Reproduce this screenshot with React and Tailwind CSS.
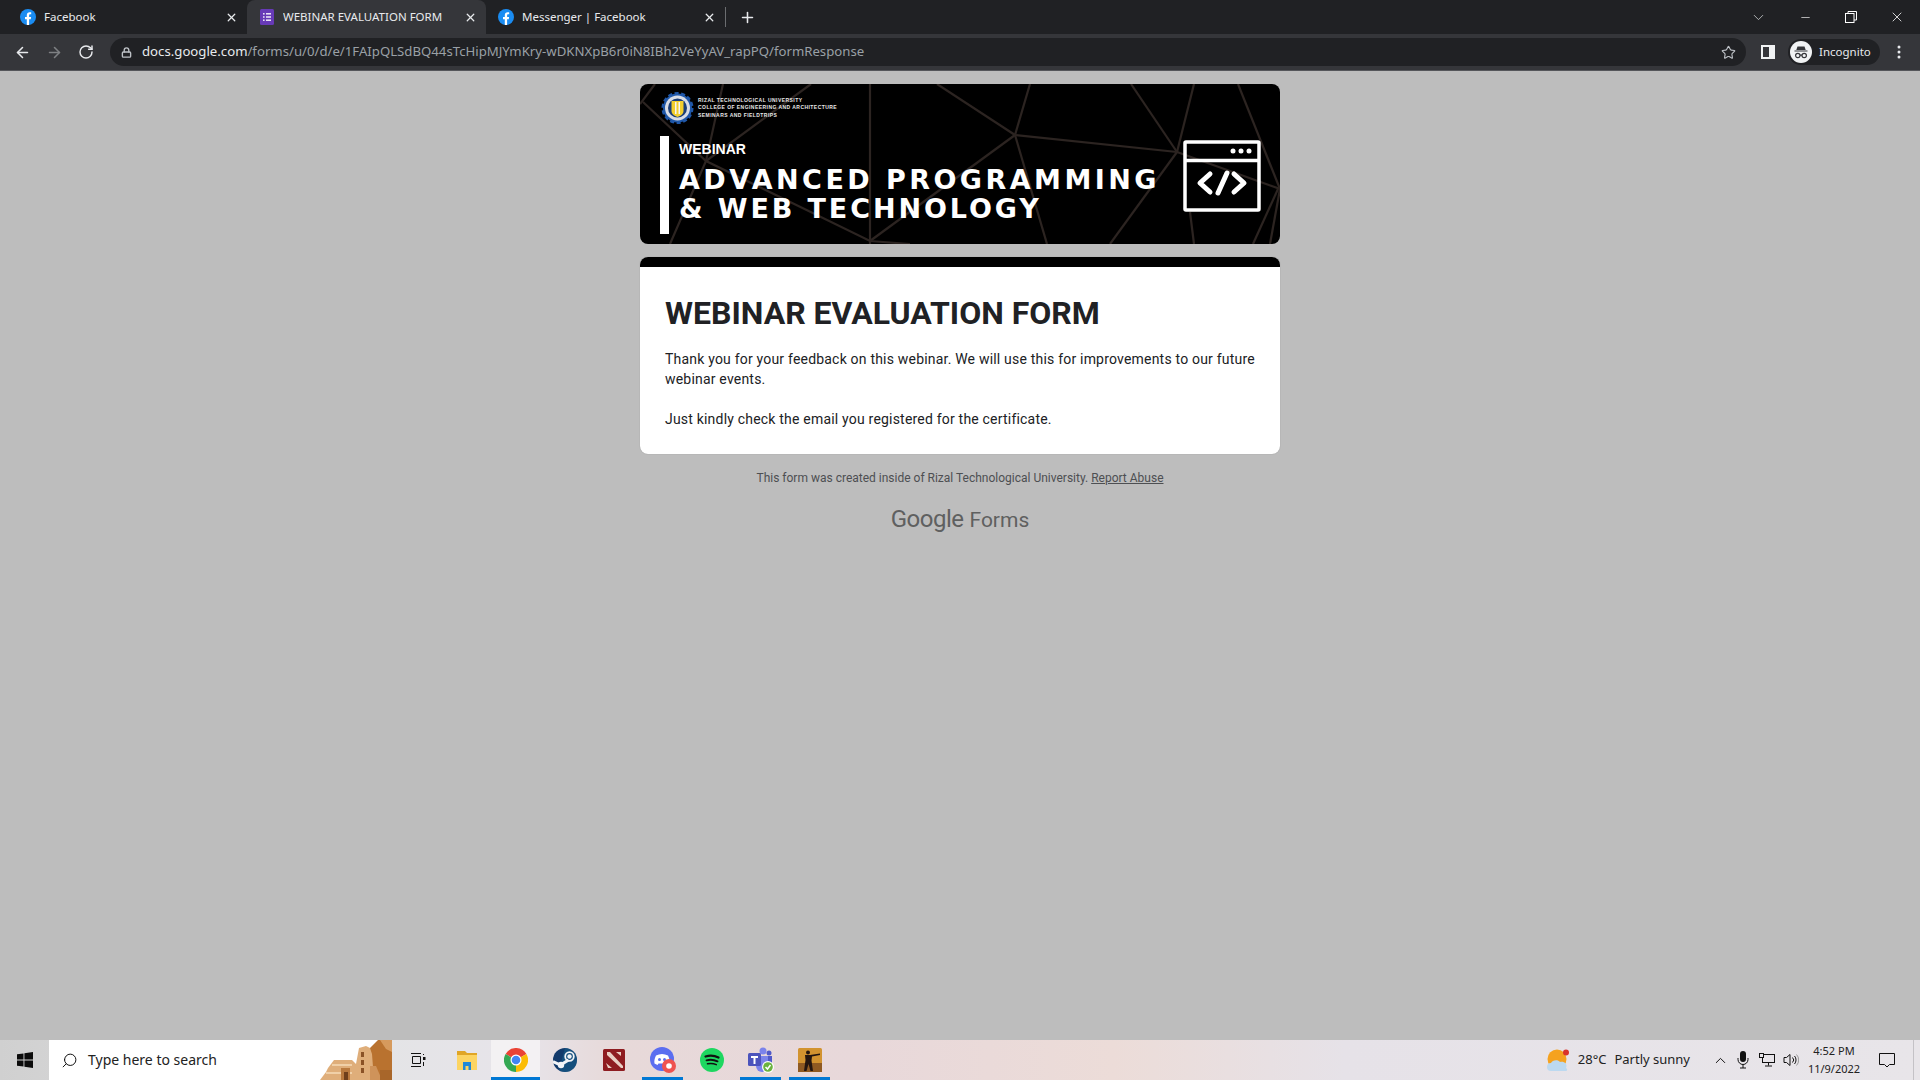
import React from "react";
import {
  ArrowLeft,
  ArrowRight,
  ChevronDown,
  ChevronUp,
  Lock,
  Minus,
  Plus,
  RotateCw,
  Search,
  Star,
  X,
} from "lucide-react";

const FbIcon = () => (
  <svg width="16" height="16" viewBox="0 0 16 16" className="shrink-0">
    <circle cx="8" cy="8" r="8" fill="#1a8cf2" />
    <path d="M6.800 16V10.300H5V8h1.800V6.300C6.800 4.400 7.900 3.300 9.600 3.300c.8 0 1.600.1 1.600.1v1.900h-.9c-.9 0-1.200.6-1.200 1.100V8h2l-.3 2.300H9.100V16z" fill="#fff" />
  </svg>
);

const FormsIcon = () => (
  <svg width="16" height="16" viewBox="0 0 16 16" className="shrink-0">
    <rect x="1" width="14" height="16" rx="1.500" fill="#673ab7" />
    <g fill="#e8e0f5">
      <rect x="4" y="4" width="1.600" height="1.600" />
      <rect x="7" y="4" width="5" height="1.600" />
      <rect x="4" y="7.200" width="1.600" height="1.600" />
      <rect x="7" y="7.200" width="5" height="1.600" />
      <rect x="4" y="10.400" width="1.600" height="1.600" />
      <rect x="7" y="10.400" width="5" height="1.600" />
    </g>
  </svg>
);

const Tab = ({ icon, title, active }) => (
  <div className={`flex h-[34px] w-[239px] items-center pl-3 pr-2 ${active ? "rounded-t-lg bg-[#35363a]" : ""}`}>
    {icon}
    <span className="ml-2 flex-1 truncate text-[11.5px] text-[#e8eaed]">{title}</span>
    <X size={13} strokeWidth={2.4} className="mr-[1px] text-[#e8eaed]" />
  </div>
);

const TabStrip = () => (
  <div className="flex h-[34px] items-center bg-[#202124] pl-2 font-['Noto_Sans',sans-serif]">
    <Tab icon={<FbIcon />} title="Facebook" />
    <Tab icon={<FormsIcon />} title="WEBINAR EVALUATION FORM" active />
    <Tab icon={<FbIcon />} title="Messenger | Facebook" />
    <div className="h-5 w-px bg-[#6b6d70]" />
    <Plus size={17} strokeWidth={2.2} className="ml-[13px] text-[#e8eaed]" />
    <div className="flex-1" />
    <ChevronDown size={17} strokeWidth={1.2} className="mr-[32px] text-[#c4c7c9]" />
    <Minus size={13} strokeWidth={1.2} className="mr-[33px] text-white" />
    <svg width="12" height="12" viewBox="0 0 12 12" fill="none" stroke="#fff" className="mr-[32px]">
      <rect x="0.500" y="2.500" width="8.500" height="9" />
      <path d="M3 2.500V.5h8.500v8.500H9" />
    </svg>
    <X size={16} strokeWidth={1.2} className="mr-[15px] text-white" />
  </div>
);

const IncognitoIcon = () => (
  <svg width="22" height="22" viewBox="0 0 22 22">
    <circle cx="11" cy="11" r="11" fill="#f1f3f4" />
    <path d="M7.500 5.500h7l1.200 3.500H6.300zM4.500 9.500h13v1h-13z" fill="#35363a" />
    <circle cx="7.800" cy="14.500" r="2.200" fill="none" stroke="#35363a" strokeWidth="1.200" />
    <circle cx="14.200" cy="14.500" r="2.200" fill="none" stroke="#35363a" strokeWidth="1.200" />
    <path d="M10 14.200h2" stroke="#35363a" strokeWidth="1.200" />
  </svg>
);

const Toolbar = () => (
  <div className="flex h-[37px] items-center border-b border-[#55565a] bg-[#35363a] pl-[14px] font-['Noto_Sans',sans-serif]">
    <ArrowLeft size={17} strokeWidth={2.2} className="text-[#e8eaed]" />
    <ArrowRight size={17} strokeWidth={2.2} className="ml-[15px] text-[#7e8083]" />
    <RotateCw size={16} strokeWidth={2.2} className="ml-[15px] text-[#e8eaed]" />
    <div className="ml-[16px] flex h-[28px] w-[1636px] items-center rounded-full bg-[#202124] pl-[11px] pr-[10px]">
      <Lock size={11} strokeWidth={3} className="text-[#bdc1c6]" />
      <div className="ml-[10px] flex-1 whitespace-nowrap text-[13.2px] text-[#9aa0a6]">
        <span className="text-[#e8eaed]">docs.google.com</span>
        /forms/u/0/d/e/1FAIpQLSdBQ44sTcHipMJYmKry-wDKNXpB6r0iN8IBh2VeYyAV_rapPQ/formResponse
      </div>
      <Star size={15} strokeWidth={1.8} className="text-[#bdc1c6]" />
    </div>
    <div className="ml-[15px] h-[14px] w-[14px] border-2 border-r-[6px] border-[#f1f3f4]" />
    <div className="ml-[13px] flex h-[26px] w-[92px] items-center rounded-full bg-[#202124] pl-[2px]">
      <IncognitoIcon />
      <span className="ml-[7px] text-[11.5px] text-[#e8eaed]">Incognito</span>
    </div>
    <svg width="4" height="14" viewBox="0 0 4 14" fill="#e8eaed" className="ml-[17px]">
      <circle cx="2" cy="2" r="1.500" />
      <circle cx="2" cy="7" r="1.500" />
      <circle cx="2" cy="12" r="1.500" />
    </svg>
  </div>
);

const BANNER_LINES = [
  "M375 51 390 0", "M375 51 297 0", "M375 51 537 68", "M375 51 230 157", "M375 51 407 160",
  "M537 68 491 0", "M537 68 554 0", "M537 68 470 160", "M537 68 640 105", "M598 0 640 105",
  "M550 128 554 160", "M638 105 613 160", "M230 0V160", "M83 0 66 77 30 160", "M3 18 66 77 230 157 270 160",
  "M171 0 66 77", "M15 0 0 20", "M640 105 630 160",
];

const Banner = () => (
  <div className="relative h-[160px] w-[640px] overflow-hidden rounded-lg bg-black text-white font-['Liberation_Sans',sans-serif]">
    <svg width="640" height="160" viewBox="0 0 640 160" fill="none" stroke="#2c2421" strokeWidth="2.200" className="absolute inset-0">
      {BANNER_LINES.map((d) => (
        <path key={d} d={d} />
      ))}
    </svg>
    <div className="relative flex h-full flex-col pl-5 pt-[7px]">
      <div className="flex items-center">
        <svg width="33" height="34" viewBox="0 0 33 34" className="ml-[1px]">
          <circle cx="16.500" cy="17" r="14.500" fill="#1f57a8" stroke="#1f57a8" strokeWidth="3" strokeDasharray="4 2.500" />
          <circle cx="16.500" cy="17" r="12.500" fill="#d8dde6" />
          <circle cx="16.500" cy="17" r="9.500" fill="#1b3f7a" />
          <path d="M10.500 10h12v10c0 3-3 5-6 6-3-1-6-3-6-6z" fill="#f2cf2e" />
          <path d="M14 11h1.500v12H14zM17.500 11H19v12h-1.500z" fill="#f5f5f5" />
        </svg>
        <div className="ml-[4px] flex flex-col gap-[2px] text-[5px] font-bold leading-[5.5px] tracking-[0.45px] text-[#e8e8e8]">
          <span>RIZAL TECHNOLOGICAL UNIVERSITY</span>
          <span>COLLEGE OF ENGINEERING AND ARCHITECTURE</span>
          <span>SEMINARS AND FIELDTRIPS</span>
        </div>
      </div>
      <div className="mt-[11px] flex items-start">
        <div className="h-[98px] w-[9px] bg-white" />
        <div className="ml-[10px] flex flex-col pt-[5px]">
          <span className="text-[14px] font-bold leading-4">WEBINAR</span>
          <span className="mt-[8px] whitespace-nowrap font-['DejaVu_Sans',sans-serif] text-[27px] font-bold leading-[29px] tracking-[3.450px]">ADVANCED PROGRAMMING</span>
          <span className="whitespace-nowrap font-['DejaVu_Sans',sans-serif] text-[27px] font-bold leading-[29px] tracking-[2.900px]">&amp; WEB TECHNOLOGY</span>
        </div>
      </div>
    </div>
    <svg width="78" height="72" viewBox="0 0 78 72" fill="none" stroke="#fff" strokeWidth="3.500" className="absolute left-[543px] top-[56px]">
      <rect x="2" y="2" width="74" height="68" rx="1" />
      <path d="M2 20.500h74" />
      <circle cx="50" cy="11" r="2.500" fill="#fff" stroke="none" />
      <circle cx="58" cy="11" r="2.500" fill="#fff" stroke="none" />
      <circle cx="66" cy="11" r="2.500" fill="#fff" stroke="none" />
      <path d="M27 34 17 43l10 9M51 34l10 9-10 9M44 33 35 53" strokeWidth="5" strokeLinecap="round" strokeLinejoin="round" />
    </svg>
  </div>
);

const FormCard = () => (
  <div className="mt-[13px] w-[640px] overflow-hidden rounded-lg bg-white shadow-[0_0_1px_rgba(0,0,0,0.3)] font-['Roboto',sans-serif]">
    <div className="h-[10px] bg-black" />
    <div className="px-[25px] pb-[25px] pt-[26px]">
      <h1 className="text-[32px] font-bold leading-10 text-[#202124]">WEBINAR EVALUATION FORM</h1>
      <div className="mt-[16px] text-sm leading-5 tracking-[0.2px] text-[#202124]">
        <p>Thank you for your feedback on this webinar. We will use this for improvements to our future webinar events.</p>
        <p className="mt-5">Just kindly check the email you registered for the certificate.</p>
      </div>
    </div>
  </div>
);

const PageBody = () => (
  <div className="flex flex-1 flex-col items-center overflow-hidden bg-[#bdbdbd] pt-[13px]">
    <Banner />
    <FormCard />
    <p className="mt-[16px] text-xs leading-4 text-[#4d4f52] font-['Roboto',sans-serif]">
      This form was created inside of Rizal Technological University. <span className="underline">Report Abuse</span>
    </p>
    <div className="mt-[19px] text-[24px] leading-7 text-[#5f6060] font-['Roboto',sans-serif]">
      <span className="tracking-[-0.5px]">Google</span> <span className="text-[21px]">Forms</span>
    </div>
  </div>
);

const Pueblo = () => (
  <svg width="72" height="40" viewBox="0 0 72 40" className="shrink-0">
    <path d="M46 40 50 8 58 0h14v40z" fill="#b9722f" />
    <path d="M60 0h12v12l-6-3z" fill="#d69a5d" />
    <path d="M0 40 6 32 8 28 14 20H32L36 24 39 8 46 6 50 8 52 14 54 40z" fill="#dfae7a" />
    <path d="M41 12h3v5h-3zM41 20h3v5h-3zM41 28h3v5h-3z" fill="#8a5226" />
    <path d="M6 32h26v2H6zM12 24h20v2H12z" fill="#f0d0a8" />
    <path d="M21 28h9v12h-9z" fill="#b9793e" />
    <path d="M24 32h4v8h-4z" fill="#6f3f1c" />
    <path d="M50 26h6l6 14H50z" fill="#cf935a" />
    <path d="M60 30h12v10H60z" fill="#a8662a" />
  </svg>
);

const ChromeIcon = () => (
  <svg width="24" height="24" viewBox="0 0 24 24">
    <path d="M12 12 1.600 6A12 12 0 0 1 22.400 6z" fill="#ea4335" />
    <path d="M12 12 22.400 6A12 12 0 0 1 12 24z" fill="#fbbc04" />
    <path d="M12 12 12 24A12 12 0 0 1 1.600 6z" fill="#34a853" />
    <circle cx="12" cy="12" r="5.500" fill="#fff" />
    <circle cx="12" cy="12" r="4.300" fill="#4285f4" />
  </svg>
);

const TaskView = () => (
  <svg width="16" height="16" viewBox="0 0 16 16" fill="none" stroke="#111">
    <path d="M1 1.500h10M1 14.500h10M2.500 4.500h8v7h-8z" />
    <rect x="13" y="5" width="2.500" height="3" fill="#111" stroke="none" />
    <path d="M13.500 2v1M13.500 10v4" />
  </svg>
);

const Explorer = () => (
  <svg width="22" height="20" viewBox="0 0 22 20">
    <path d="M1 1h8l2 2h10v4H1z" fill="#e0a526" />
    <path d="M1 5h20v15H1z" fill="#fcd462" />
    <path d="M7 12h8v8h-2.500v-4h-3v4H7z" fill="#1e88d9" />
  </svg>
);

const Steam = () => (
  <svg width="24" height="24" viewBox="0 0 24 24" fill="none">
    <circle cx="12" cy="12" r="12" fill="#123a6b" />
    <path d="M12 0A12 12 0 0 1 24 12 12 12 0 0 1 12 24 12 12 0 0 1 6 22z" fill="#17638f" opacity="0.5" />
    <path d="M0 13.500 7.500 17l8-5" stroke="#f2f4f7" strokeWidth="3" />
    <circle cx="8" cy="17" r="3.200" fill="#f2f4f7" />
    <circle cx="16.500" cy="8.500" r="4.300" stroke="#f2f4f7" strokeWidth="1.800" />
    <circle cx="16.500" cy="8.500" r="2.200" fill="#f2f4f7" />
  </svg>
);

const Dota = () => (
  <svg width="22" height="22" viewBox="0 0 22 22">
    <rect width="22" height="22" rx="1.500" fill="#8e1c20" />
    <path d="M4 3h3l13 14v2h-2L4 6z" fill="#e9cfc4" />
    <path d="M3 14l2 5h4zM13 3h5v4z" fill="#e9cfc4" />
  </svg>
);

const Discord = () => (
  <svg width="26" height="26" viewBox="0 0 26 26">
    <circle cx="12" cy="12" r="12" fill="#5b6ef0" />
    <path d="M6 8.500c4-2 8-2 12 0 1.500 3 2 5.500 1.500 8l-3 1.500-1-1.500h-7l-1 1.500-3-1.500C4 14 4.500 11.500 6 8.500z" fill="#fff" />
    <circle cx="9.500" cy="12.500" r="1.500" fill="#5b6ef0" />
    <circle cx="14.500" cy="12.500" r="1.500" fill="#5b6ef0" />
    <circle cx="19" cy="19" r="7" fill="#ef5350" />
    <circle cx="19" cy="19" r="2.800" fill="#fff" />
  </svg>
);

const Spotify = () => (
  <svg width="24" height="24" viewBox="0 0 24 24" fill="none" stroke="#111" strokeLinecap="round">
    <circle cx="12" cy="12" r="12" fill="#1ed760" stroke="none" />
    <path d="M5.500 8.500c4-1.200 9-1 13 1" strokeWidth="2.200" />
    <path d="M6.500 12.300c3.500-1 7.500-.7 11 1" strokeWidth="1.900" />
    <path d="M7.500 15.800c3-.7 6-.5 8.800.8" strokeWidth="1.500" />
  </svg>
);

const Teams = () => (
  <svg width="26" height="26" viewBox="0 0 26 26">
    <circle cx="15" cy="4" r="3.500" fill="#7b83eb" />
    <circle cx="21" cy="6" r="2.500" fill="#5059c9" />
    <path d="M17 9h7v8a3.500 3.500 0 0 1-7 0z" fill="#5059c9" />
    <path d="M8 9h12v10a6 6 0 0 1-12 0z" fill="#7b83eb" />
    <rect y="6" width="13" height="13" rx="1.500" fill="#4b53bc" />
    <path d="M3 9h7v2H7.500v6h-2v-6H3z" fill="#fff" />
    <circle cx="20" cy="20" r="6" fill="#fff" />
    <circle cx="20" cy="20" r="4.800" fill="#6bb33f" />
    <path d="M17.500 20l2 2 3-4" fill="none" stroke="#fff" strokeWidth="1.500" />
  </svg>
);

const CsIcon = () => (
  <svg width="24" height="24" viewBox="0 0 24 24">
    <rect width="24" height="24" rx="1.500" fill="#d2932f" />
    <path d="M0 15h24v9H0z" fill="#8f5a22" />
    <circle cx="10" cy="4.500" r="2" fill="#241610" />
    <path d="M7 7h5l10-1.500v1.500l-8 1.500 -.5 4 1.500 10.500h-2.500l-2-7-2 7H6l1.500-11z" fill="#241610" />
  </svg>
);

const TaskCell = ({ children, bar, active }) => (
  <div className={`relative flex h-10 w-[49px] items-center justify-center ${active ? "bg-[#f3f1f3]" : ""}`}>
    {children}
    {bar && <div className={`absolute bottom-0 h-[3px] bg-[#0078d4] ${active ? "inset-x-0" : "inset-x-[4px]"}`} />}
  </div>
);

const Taskbar = () => (
  <div className="flex h-10 items-center bg-[linear-gradient(90deg,#d0d0d0_0%,#e4e4e6_20%,#e7e4ea_27%,#e7d9d9_32%,#e8d8da_45%,#ecdcd8_58%,#e6e2e8_70%,#e8e5e9_100%)] font-['Noto_Sans',sans-serif]">
    <div className="flex w-[49px] justify-center">
      <svg width="16" height="16" viewBox="0 0 16 16" fill="#0b0b0b">
        <path d="M0 2.300 6.500 1.400v6.100H0zM7.400 1.300 16 0v7.500H7.400zM0 8.500h6.500v6.100L0 13.700zM7.400 8.500H16V16l-8.600-1.300z" />
      </svg>
    </div>
    <div className="flex h-10 w-[343px] items-center bg-white pl-[12px]">
      <Search size={17} strokeWidth={1.4} className="-scale-x-100 text-[#111]" />
      <span className="ml-[10px] flex-1 text-sm text-[#222]">Type here to search</span>
      <Pueblo />
    </div>
    <div className="ml-[1px] flex">
      <TaskCell><TaskView /></TaskCell>
      <TaskCell><Explorer /></TaskCell>
      <TaskCell bar active><ChromeIcon /></TaskCell>
      <TaskCell><Steam /></TaskCell>
      <TaskCell><Dota /></TaskCell>
      <TaskCell bar><Discord /></TaskCell>
      <TaskCell><Spotify /></TaskCell>
      <TaskCell bar><Teams /></TaskCell>
      <TaskCell bar><CsIcon /></TaskCell>
    </div>
    <div className="flex-1" />
    <svg width="23" height="23" viewBox="0 0 23 23">
      <circle cx="10" cy="10" r="9.500" fill="#f5a21f" />
      <circle cx="19" cy="3.500" r="3" fill="#d9342b" />
      <path d="M4 22a4 4 0 0 1 0-8c1-3 7-4 9-1 4-1 8 2 6 6 2 1 1 3 0 3z" fill="#bcd9f0" />
    </svg>
    <span className="ml-[8px] text-[13px] text-[#222]">28°C</span>
    <span className="ml-[8px] text-[13px] text-[#222]">Partly sunny</span>
    <ChevronUp size={17} strokeWidth={1.4} className="ml-[22px] text-[#111]" />
    <svg width="12" height="18" viewBox="0 0 12 18" fill="#111" className="ml-[8px]">
      <rect x="3" width="6" height="11" rx="3" />
      <path d="M1 7v1.500a5 5 0 0 0 10 0V7M6 13.500V17M3 17h6" fill="none" stroke="#111" />
    </svg>
    <svg width="16" height="14" viewBox="0 0 16 14" fill="none" stroke="#111" className="ml-[10px]">
      <rect x="3.500" y="1.500" width="12" height="8" />
      <rect x="0.500" y="0.500" width="4" height="4" fill="#e8e5e9" />
      <path d="M9.500 9.500v3M6 13h7" />
    </svg>
    <svg width="16" height="14" viewBox="0 0 16 14" fill="none" stroke="#111" className="ml-[8px]">
      <path d="M1 4.500h2.500L7 1.500v11l-3.500-3H1z" />
      <path d="M9.500 4.500a3.500 3.500 0 0 1 0 5M11.500 3a6 6 0 0 1 0 8" />
      <path d="M13.500 1.500a8 8 0 0 1 0 11" stroke="#999" />
    </svg>
    <div className="ml-[7px] flex w-[56px] flex-col items-center text-[11px] leading-[18px] text-[#222]">
      <span>4:52 PM</span>
      <span>11/9/2022</span>
    </div>
    <svg width="16" height="16" viewBox="0 0 16 16" fill="none" stroke="#111" className="ml-[17px]">
      <path d="M.5 1.500h15v11h-5l-2.500 2.500-2.500-2.500h-5z" />
    </svg>
    <div className="ml-[18px] h-10 w-[7px] border-l border-[#c4c2c6]" />
  </div>
);

export default function App() {
  return (
    <div className="flex h-screen w-screen flex-col overflow-hidden">
      <TabStrip />
      <Toolbar />
      <PageBody />
      <Taskbar />
    </div>
  );
}
